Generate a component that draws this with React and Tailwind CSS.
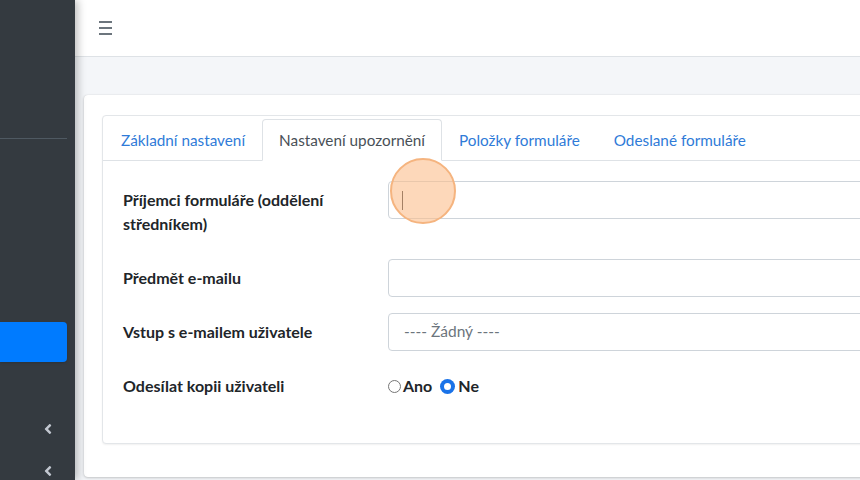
import React from "react";
import { FaAngleLeft } from "react-icons/fa";

const font = { fontFamily: "Lato, 'Open Sans', sans-serif" };

const Sidebar = () => (
  <aside className="relative z-10 w-[75px] shrink-0 bg-[#343a40] shadow-[3px_0_8px_rgba(0,0,0,0.25)] flex flex-col">
    <div className="h-[139px] w-[67px] border-b border-[#4f5962]" />
    <div className="h-[183px]" />
    <div className="h-[40px] w-[67px] rounded-r-[4px] bg-[#007bff] shadow-sm" />
    <div className="h-[59px]" />
    <div className="flex flex-col gap-[26px] pl-[40px] text-[#c2c7d0]">
      <FaAngleLeft size={16} />
      <FaAngleLeft size={16} />
    </div>
  </aside>
);

const tabs = [
  { label: "Základní nastavení", active: false },
  { label: "Nastavení upozornění", active: true },
  { label: "Položky formuláře", active: false },
  { label: "Odeslané formuláře", active: false },
];

const Row = ({ label, children, className = "" }) => (
  <div className={"flex items-start mb-4 " + className}>
    <label className="w-[265px] shrink-0 pr-[20px] py-[7px] text-[16px] leading-[24px] font-bold text-[#212529]">
      {label}
    </label>
    <div className="flex-1">{children}</div>
  </div>
);

const Input = ({ children }) => (
  <div className="h-[38px] w-full rounded-[4px] border border-[#ced4da] bg-white flex items-center px-[15px] text-[15.5px] text-[#6c757d]">
    {children}
  </div>
);

export default function App() {
  return (
    <div className="flex h-[480px] w-[860px] overflow-hidden bg-[#f4f6f9]" style={font}>
      <Sidebar />
      <div className="flex-1 flex flex-col min-w-0">
        <header className="h-[57px] shrink-0 bg-white border-b border-[#dee2e6] flex items-center pl-[24px]">
          <div className="flex flex-col gap-[4px]">
            <span className="block h-[2px] w-[13px] bg-[#6c757d]" />
            <span className="block h-[2px] w-[13px] bg-[#6c757d]" />
            <span className="block h-[2px] w-[13px] bg-[#6c757d]" />
          </div>
        </header>
        <main className="flex-1 pl-[9px] pt-[38px]">
          <div className="w-[840px] h-[382px] rounded-[4px] bg-white shadow-[0_0_1px_rgba(0,0,0,0.125),0_1px_3px_rgba(0,0,0,0.2)] pl-[18px] pt-[20px]">
            <div className="relative rounded-[4px] border border-[#e3e6e9] shadow-[0_1px_2px_rgba(0,0,0,0.06)] bg-white">
              <nav className="flex pt-[3px] pl-[1px] border-b border-[#dee2e6] text-[15.3px]">
                {tabs.map((t) => (
                  <div
                    key={t.label}
                    className={
                      "h-[42px] px-[16px] flex items-center -mb-px rounded-t-[4px] border " +
                      (t.active
                        ? "border-[#dee2e6] border-b-white bg-white text-[#495057]"
                        : "border-transparent text-[#2f7bd8]")
                    }
                  >
                    {t.label}
                  </div>
                ))}
              </nav>
              <div className="px-[20px] pt-[20px] pb-[22px]">
                <Row label="Příjemci formuláře (oddělení středníkem)">
                  <Input>
                    <span className="block -ml-[2px] h-[19px] w-px bg-[#212529]" />
                  </Input>
                </Row>
                <Row label="Předmět e-mailu">
                  <Input />
                </Row>
                <Row label="Vstup s e-mailem uživatele">
                  <Input>---- Žádný ----</Input>
                </Row>
                <Row label="Odesílat kopii uživateli" className="mb-0">
                  <div className="h-[38px] flex items-center text-[16px] font-bold text-[#212529]">
                    <span className="h-[13px] w-[13px] rounded-full border border-[#767676] bg-white" />
                    <span className="ml-[2px]">Ano</span>
                    <span className="ml-[9px] h-[13px] w-[13px] rounded-full border-[3px] border-[#1a73e8] bg-white ring-1 ring-[#1a73e8]" />
                    <span className="ml-[4px]">Ne</span>
                  </div>
                </Row>
              </div>
              <div className="absolute left-[287px] top-[42px] h-[66px] w-[66px] rounded-full border-2 border-[#f5b47f] bg-[rgba(252,190,140,0.6)]" />
            </div>
          </div>
        </main>
      </div>
    </div>
  );
}
